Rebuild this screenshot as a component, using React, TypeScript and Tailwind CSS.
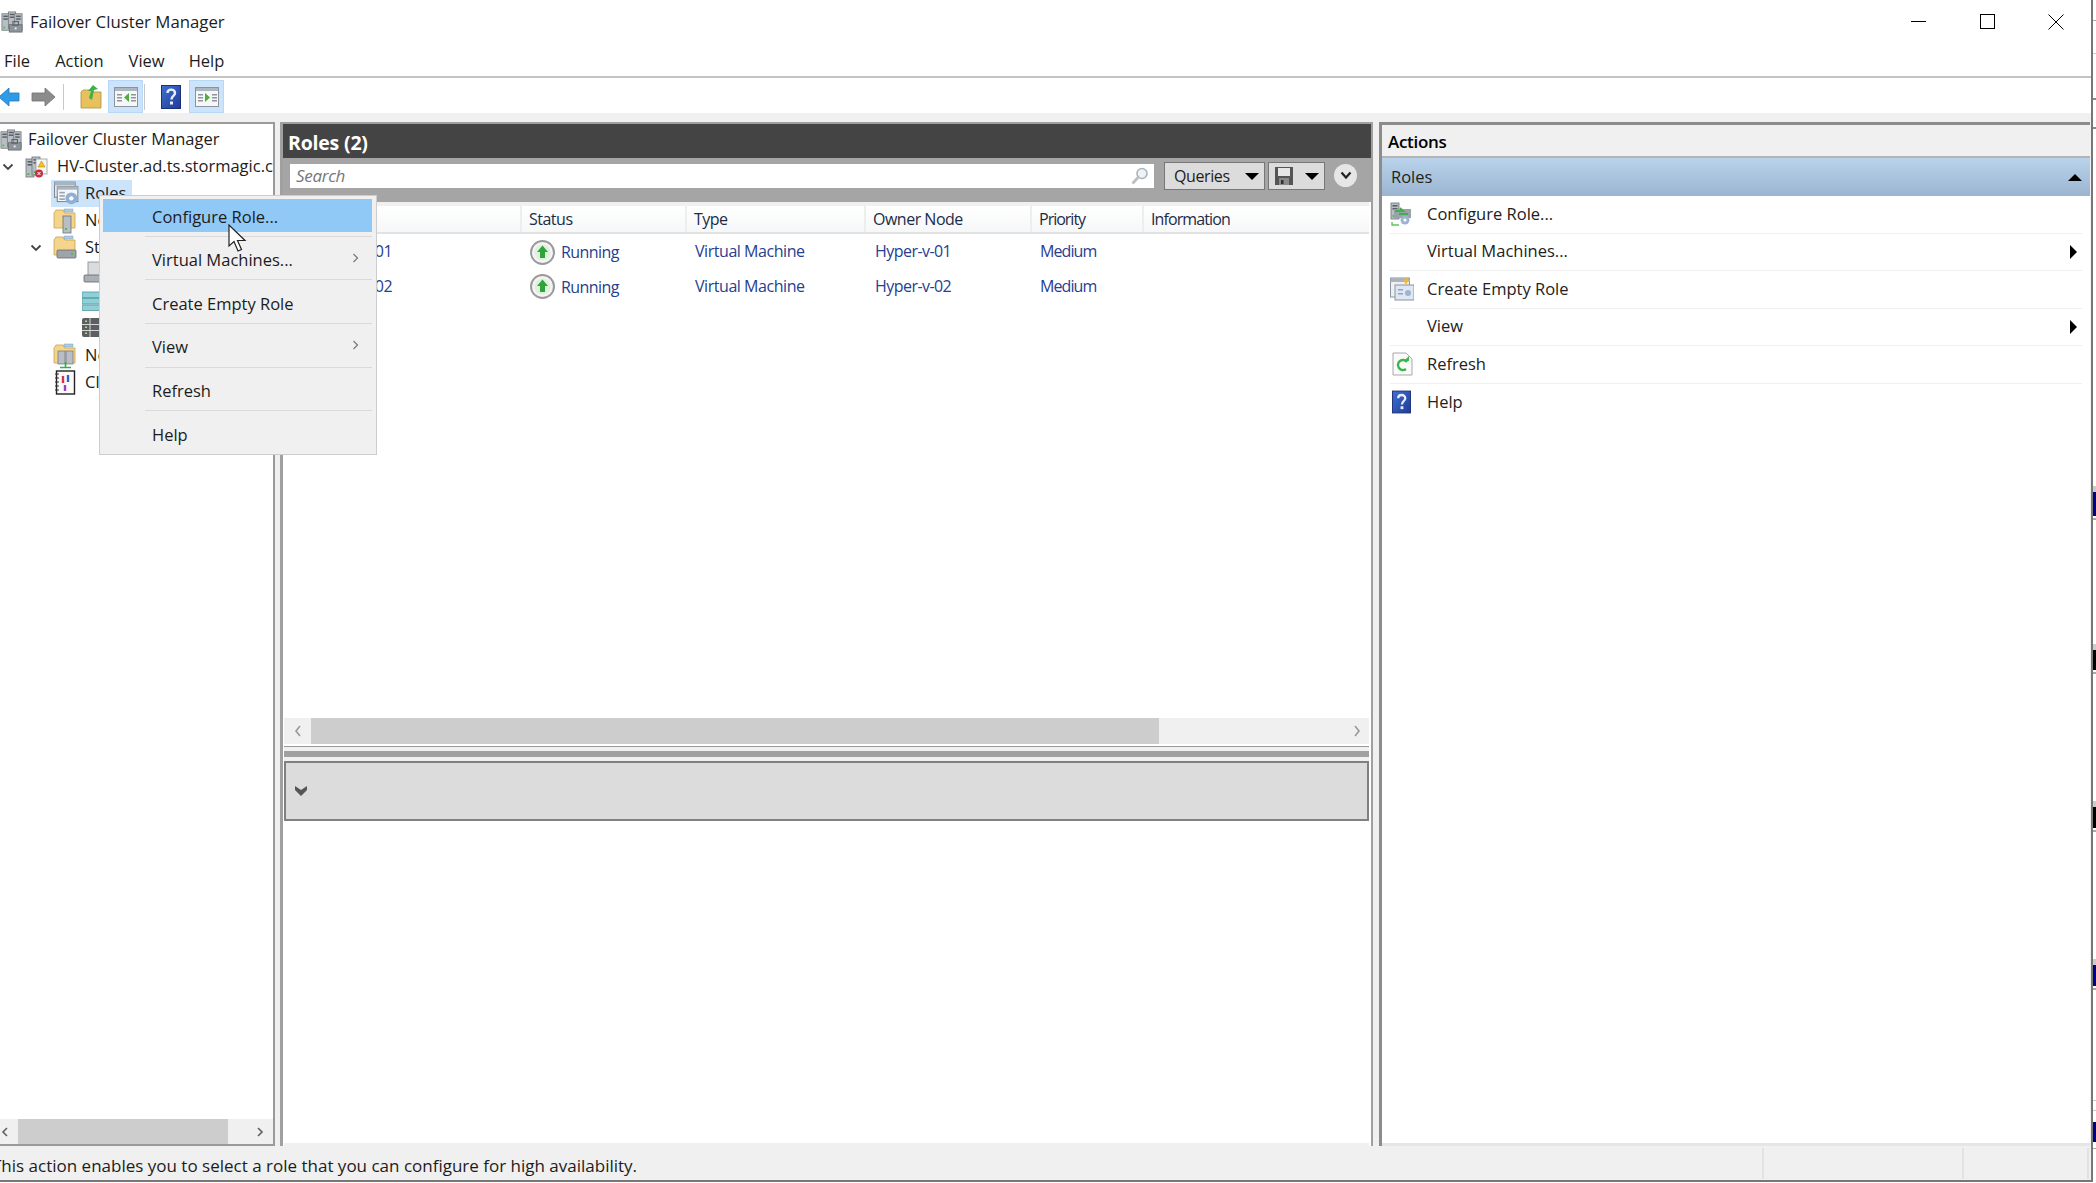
import { ReactNode } from "react"

const sans = "font-['Open_Sans','Noto_Sans',sans-serif]"

function Server({ x, y, w = 8, h = 18, fill = "#b9bec4" }: { x: number; y: number; w?: number; h?: number; fill?: string }) {
  return (
    <g>
      <rect x={x} y={y} width={w} height={h} fill={fill} stroke="#6c7278" strokeWidth="0.8" />
      <rect x={x + 1.5} y={y + 2} width={w - 3} height="1.6" fill="#596066" />
      <rect x={x + 1.5} y={y + 5} width={w - 3} height="1.6" fill="#596066" />
      <rect x={x + 1.5} y={y + h - 4} width="2" height="2" fill="#49c24a" />
    </g>
  )
}

function ClusterIcon({ size = 22 }: { size?: number }) {
  return (
    <svg width={size} height={size} viewBox="0 0 24 24" className="shrink-0">
      <Server x={1} y={3} />
      <Server x={8} y={1} />
      <Server x={15} y={3} />
      <rect x="9" y="15" width="14" height="8" fill="#8d949b" stroke="#5e646a" strokeWidth="0.8" />
      <rect x="13" y="11.5" width="6" height="4" fill="none" stroke="#5e646a" strokeWidth="1.2" />
      <circle cx="16" cy="19" r="1.2" fill="#e8e8e8" />
    </svg>
  )
}

function ClusterErrIcon() {
  return (
    <svg width={24} height={24} viewBox="0 0 24 24" className="shrink-0">
      <Server x={1} y={4} />
      <Server x={7} y={2} />
      <rect x="11" y="4" width="11" height="15" fill="#f6f6f6" stroke="#9a9a9a" strokeWidth="0.8" />
      <path d="M16.5 6 L20 12 L13 12 Z" fill="#f5c518" stroke="#9a7a10" strokeWidth="0.5" />
      <circle cx="14" cy="18.5" r="4" fill="#c8303f" />
      <path d="M12.5 17 L15.5 20 M15.5 17 L12.5 20" stroke="#fff" strokeWidth="1" />
    </svg>
  )
}

function WindowGearIcon() {
  return (
    <svg width={26} height={26} viewBox="0 0 24 24" className="shrink-0">
      <rect x="0.5" y="1" width="19" height="14" fill="#eef1f4" stroke="#7d8791" />
      <rect x="0.5" y="1" width="19" height="3" fill="#aab4bf" />
      <rect x="3" y="5" width="19" height="14" fill="#f4f6f8" stroke="#7d8791" />
      <rect x="3" y="5" width="19" height="3" fill="#aab4bf" />
      <rect x="5" y="10" width="5" height="1.5" fill="#9aa4ae" />
      <rect x="5" y="13" width="5" height="1.5" fill="#9aa4ae" />
      <rect x="5" y="16" width="5" height="1.5" fill="#9aa4ae" />
      <circle cx="16" cy="16" r="5.5" fill="#8fb0d4" />
      <circle cx="16" cy="16" r="2" fill="#fff" />
    </svg>
  )
}

function FolderBase({ children }: { children?: ReactNode }) {
  return (
    <svg width={24} height={26} viewBox="0 0 24 26" className="shrink-0">
      <path d="M1 5 V20 H22 V5 H12 L10 2 H3 L1 5 Z" fill="#f5d58a" stroke="#c4a255" strokeWidth="0.8" />
      <rect x="11" y="1" width="9" height="3" fill="#aecbe2" stroke="#86a0b6" strokeWidth="0.5" />
      {children}
    </svg>
  )
}

function Toolbar2Pane({ right }: { right?: boolean }) {
  return (
    <svg width={24} height={20} viewBox="0 0 24 20">
      <rect x="0.5" y="0.5" width="23" height="19" fill="#f7f7f7" stroke="#8a949e" />
      <rect x="1" y="1" width="22" height="3" fill="#aeb7c0" />
      <rect x="3" y="7" width="5" height="1.5" fill="#8c96a0" />
      <rect x="3" y="10" width="5" height="1.5" fill="#8c96a0" />
      <rect x="3" y="13" width="5" height="1.5" fill="#8c96a0" />
      <rect x="17" y="7" width="5" height="1.5" fill="#8c96a0" />
      <rect x="17" y="10" width="5" height="1.5" fill="#8c96a0" />
      <rect x="17" y="13" width="5" height="1.5" fill="#8c96a0" />
      {right ? <path d="M10 6 L15 10.5 L10 15 Z" fill="#4cae3f" /> : <path d="M15 6 L10 10.5 L15 15 Z" fill="#4cae3f" />}
    </svg>
  )
}

function HelpBook({ w = 20, h = 24 }: { w?: number; h?: number }) {
  return (
    <svg width={w} height={h} viewBox="0 0 20 24" className="shrink-0">
      <defs>
        <linearGradient id="helpb" x1="0" y1="0" x2="1" y2="1">
          <stop offset="0" stopColor="#3f6fd0" />
          <stop offset="1" stopColor="#1f3c96" />
        </linearGradient>
      </defs>
      <rect x="0.5" y="0.5" width="19" height="23" fill="url(#helpb)" stroke="#1c2f78" />
      <path d="M6.5 8 C6.5 3.5 14 3.5 14 8 C14 11 10.5 11 10.5 14.5" fill="none" stroke="#e8eefc" strokeWidth="2.4" />
      <rect x="9" y="16.5" width="3" height="3" fill="#e8eefc" />
    </svg>
  )
}

function RunningIcon() {
  return (
    <svg width={25} height={25} viewBox="0 0 25 25" className="shrink-0">
      <circle cx="12.5" cy="12.5" r="11.5" fill="#f4f4f4" stroke="#9a9a9a" strokeWidth="2" />
      <circle cx="12.5" cy="12.5" r="8" fill="#dff1dc" />
      <path d="M12.5 5.5 L18 12 H15 V18 H10 V12 H7 Z" fill="#2fa43a" />
    </svg>
  )
}

function TreeChevron() {
  return (
    <svg width={12} height={8} viewBox="0 0 12 8" className="shrink-0">
      <path d="M1.5 1.5 L6 6 L10.5 1.5" fill="none" stroke="#444" strokeWidth="1.8" />
    </svg>
  )
}

function TreeRow({ indent, chevronX, iconW, icon, label, active }: { indent: number; chevronX?: number; iconW: number; icon: ReactNode; label: string; active?: boolean }) {
  return (
    <div className="flex h-[27px] items-center overflow-hidden">
      <div className="flex h-full shrink-0 items-center" style={{ width: indent, paddingLeft: chevronX }}>
        {chevronX !== undefined && <TreeChevron />}
      </div>
      <div className={`flex h-full items-center whitespace-nowrap ${active ? "bg-[#cce4fb] pl-[3px] pr-[6px]" : ""}`}>
        <div className="flex shrink-0 items-center" style={{ width: iconW }}>
          {icon}
        </div>
        <span>{label}</span>
      </div>
    </div>
  )
}

const columns = [
  { label: "Name", w: 238, track: "" },
  { label: "Status", w: 165, track: "" },
  { label: "Type", w: 179, track: "" },
  { label: "Owner Node", w: 166, track: "" },
  { label: "Priority", w: 112, track: "tracking-[-1px]" },
  { label: "Information", w: 226, track: "tracking-[-0.9px]" },
]

function TableRow({ name, owner, h }: { name: string; owner: string; h: string }) {
  return (
    <div className={`flex items-center text-[16px] tracking-[-0.55px] text-[#26408f] ${h}`}>
      <div className="w-[108px] shrink-0 pb-[2px] text-right">{name}</div>
      <div className="flex w-[129px] shrink-0" />
      <div className="flex w-[165px] shrink-0 items-center gap-[6px] pl-[9px]">
        <RunningIcon />
        <span>Running</span>
      </div>
      <div className="w-[179px] shrink-0 pb-[2px] pl-[9px] tracking-[-0.45px]">Virtual Machine</div>
      <div className="w-[166px] shrink-0 pb-[2px] pl-[10px]">{owner}</div>
      <div className="w-[112px] shrink-0 pb-[2px] pl-[9px] tracking-[-0.9px]">Medium</div>
    </div>
  )
}

function ActionRow({ label, icon, arrow }: { label: string; icon?: ReactNode; arrow?: boolean }) {
  return (
    <div className="mx-[8px] flex h-[37.5px] items-center border-b border-[#efefef] text-[16.5px] text-[#222] last:border-b-0">
      <div className="flex w-[37px] shrink-0 items-center">{icon}</div>
      <span className="flex-1">{label}</span>
      {arrow && <div className="mr-[5px] h-0 w-0 border-y-[7px] border-l-[7px] border-y-transparent border-l-black" />}
    </div>
  )
}

const menuItems = ["Configure Role...", "Virtual Machines...", "Create Empty Role", "View", "Refresh", "Help"]

function ContextMenu() {
  return (
    <div className="absolute left-[99px] top-[195px] z-10 w-[278px] border border-[#cdcdcd] bg-[#f0f0f0] pb-[4px] pl-[3px] pr-[4px] pt-[3px] text-[16.5px] text-[#1c1c1c]">
      {menuItems.map((item, i) => (
        <div key={item}>
          <div className={`flex h-[33px] items-center pl-[49px] pr-[10px] pt-[3px] ${i === 0 ? "bg-[#90c8f6]" : ""}`}>
            <span className="flex-1">{item}</span>
            {(i === 1 || i === 3) && (
              <svg width={7} height={10} viewBox="0 0 7 10" className="mr-[3px] -translate-y-[3px]">
                <path d="M1.5 1 L5.5 5 L1.5 9" fill="none" stroke="#777" strokeWidth="1.2" />
              </svg>
            )}
          </div>
          {i < 5 && (
            <div className="flex h-[10.6px] items-center pb-[2px] pl-[42px]">
              <div className="h-px w-full bg-[#dadada]" />
            </div>
          )}
        </div>
      ))}
    </div>
  )
}

function SideSlivers() {
  return (
    <div className="flex w-[3px] shrink-0 flex-col">
      <div className="mt-[20px] h-[1px] bg-[#aaa]" />
      <div className="mt-[32px] h-[1px] bg-[#ccc]" />
      <div className="mt-[44px] h-[2px] bg-[#888]" />
      <div className="mt-[27px] h-[2px] bg-[#888]" />
      <div className="mt-[357px] h-[6px] bg-[#ccc]" />
      <div className="h-[24px] bg-[#000080]" />
      <div className="mt-[2px] h-[2px] bg-[#aaa]" />
      <div className="mt-[124px] h-[6px] bg-[#ccc]" />
      <div className="h-[20px] bg-black" />
      <div className="mt-[2px] h-[2px] bg-[#aaa]" />
      <div className="mt-[127px] h-[6px] bg-[#ccc]" />
      <div className="h-[21px] bg-black" />
      <div className="mt-[2px] h-[2px] bg-[#aaa]" />
      <div className="mt-[127px] h-[6px] bg-[#ccc]" />
      <div className="h-[21px] bg-[#000080]" />
      <div className="mt-[2px] h-[2px] bg-[#aaa]" />
      <div className="mt-[110px] h-[1px] bg-[#ccc]" />
      <div className="mt-[9px] h-[1px] bg-[#ccc]" />
      <div className="mt-[11px] h-[20px] bg-[#000080]" />
      <div className="mt-[6px] h-[1px] bg-[#aaa]" />
    </div>
  )
}

export default function App() {
  return (
    <div className={`relative flex h-[1183px] w-[2096px] overflow-hidden bg-white text-[#1c1c1c] ${sans}`}>
      <div className="flex h-[1182px] w-[2093px] shrink-0 flex-col border-r-2 border-[#777]">
        {/* title bar */}
        <div className="flex h-[43px] shrink-0 items-center">
          <div className="ml-[1px] mr-[7px]">
            <ClusterIcon />
          </div>
          <span className="flex-1 text-[16.8px]">Failover Cluster Manager</span>
          <div className="flex w-[71px] items-center justify-center">
            <div className="h-px w-[15px] bg-black" />
          </div>
          <div className="flex w-[67px] items-center justify-center">
            <div className="h-[15px] w-[15px] border border-black" />
          </div>
          <div className="flex w-[70px] items-center justify-center">
            <svg width={16} height={16} viewBox="0 0 16 16">
              <path d="M0.5 0.5 L15.5 15.5 M15.5 0.5 L0.5 15.5" stroke="black" strokeWidth="1" />
            </svg>
          </div>
        </div>

        {/* menu bar */}
        <div className="flex h-[35px] shrink-0 items-center border-b-2 border-[#c4c4c4] pt-[4px] text-[16.5px]">
          <span className="ml-[4px]">File</span>
          <span className="ml-[25px]">Action</span>
          <span className="ml-[25px]">View</span>
          <span className="ml-[24px]">Help</span>
        </div>

        {/* toolbar */}
        <div className="flex h-[35px] shrink-0 items-center pt-[2px]">
          <svg width={22} height={20} viewBox="0 0 22 20" className="-ml-[1px]">
            <path d="M0 10 L10 1 V6 H20 V14 H10 V19 Z" fill="#2f9be8" stroke="#1f78bd" strokeWidth="0.8" />
          </svg>
          <svg width={25} height={20} viewBox="0 0 25 20" className="ml-[10px]">
            <path d="M24 10 L14 1 V6 H1 V14 H14 V19 Z" fill="#8c8c8c" stroke="#6e6e6e" strokeWidth="0.8" />
          </svg>
          <div className="ml-[7px] h-[26px] w-px bg-[#c8c8c8]" />
          <svg width={22} height={26} viewBox="0 0 22 26" className="ml-[16px]">
            <path d="M1 8 V24 H21 V8 H12 L10 6 H3 Z" fill="#e8c15f" stroke="#b0913e" strokeWidth="0.8" />
            <path d="M9 14 L11 7 L8 7 L13 1 L18 5 L14 6 L12 16 Z" fill="#3fb04a" />
          </svg>
          <div className="ml-[6px] flex h-[33px] w-[35px] items-center justify-center border border-[#b8d8f5] bg-[#cce4fb]">
            <Toolbar2Pane />
          </div>
          <div className="ml-[1px] h-[26px] w-px bg-[#c8c8c8]" />
          <div className="ml-[16px]">
            <HelpBook />
          </div>
          <div className="ml-[8px] flex h-[33px] w-[35px] items-center justify-center border border-[#b8d8f5] bg-[#cce4fb]">
            <Toolbar2Pane right />
          </div>
        </div>

        {/* panes */}
        <div className="flex min-h-0 flex-1 bg-[#f0f0f0] pt-[9px]">
          {/* tree */}
          <div className="flex w-[275px] shrink-0 flex-col border-r-2 border-t-2 border-b-2 border-[#9a9a9a] bg-white text-[16.5px]">
            <div className="flex-1 overflow-hidden pt-[2px]">
              <TreeRow indent={0} iconW={28} icon={<ClusterIcon />} label="Failover Cluster Manager" />
              <TreeRow indent={25} chevronX={2} iconW={32} icon={<ClusterErrIcon />} label="HV-Cluster.ad.ts.stormagic.com" />
              <TreeRow indent={51} iconW={31} active icon={<WindowGearIcon />} label="Roles" />
              <TreeRow
                indent={53}
                iconW={32}
                icon={
                  <FolderBase>
                    <rect x="10" y="8" width="8" height="17" fill="#b9bec4" stroke="#6c7278" strokeWidth="0.8" />
                    <rect x="12" y="20" width="2" height="2" fill="#49c24a" />
                  </FolderBase>
                }
                label="Nodes"
              />
              <TreeRow
                indent={53}
                chevronX={30}
                iconW={32}
                icon={
                  <FolderBase>
                    <rect x="4" y="15" width="19" height="8" rx="1" fill="#9ea4aa" stroke="#666c72" strokeWidth="0.8" />
                    <rect x="18" y="18" width="2" height="2" fill="#49c24a" />
                  </FolderBase>
                }
                label="Storage"
              />
              <TreeRow
                indent={82}
                iconW={32}
                icon={
                  <svg width={24} height={24} viewBox="0 0 24 24" className="shrink-0 -translate-y-[3px]">
                    <rect x="6" y="2" width="12" height="14" fill="#d8dcdf" stroke="#888" strokeWidth="0.8" />
                    <rect x="2" y="15" width="20" height="7" rx="1" fill="#aab0b5" stroke="#666" strokeWidth="0.8" />
                  </svg>
                }
                label="Disks"
              />
              <TreeRow
                indent={82}
                iconW={32}
                icon={
                  <svg width={24} height={24} viewBox="0 0 24 24" className="shrink-0 -translate-y-[1px]">
                    <rect x="0" y="3" width="20" height="5.5" fill="#8fd0d6" stroke="#4f9aa0" strokeWidth="0.8" />
                    <rect x="0" y="9.5" width="20" height="5.5" fill="#8fd0d6" stroke="#4f9aa0" strokeWidth="0.8" />
                    <rect x="0" y="16" width="20" height="5.5" fill="#8fd0d6" stroke="#4f9aa0" strokeWidth="0.8" />
                  </svg>
                }
                label="Pools"
              />
              <TreeRow
                indent={82}
                iconW={32}
                icon={
                  <svg width={24} height={24} viewBox="0 0 24 24" className="shrink-0 -translate-y-[2px]">
                    <rect x="0" y="3" width="20" height="19" rx="2" fill="#5c5f62" />
                    <path d="M0 9.5 H20 M0 15.5 H20 M8 3 V22" stroke="#d5d5d5" strokeWidth="1" />
                    <rect x="3" y="5.5" width="2" height="1.5" fill="#9fe07a" />
                    <rect x="3" y="11.5" width="2" height="1.5" fill="#9fe07a" />
                    <rect x="3" y="17.5" width="2" height="1.5" fill="#9fe07a" />
                  </svg>
                }
                label="Enclosures"
              />
              <TreeRow
                indent={53}
                iconW={32}
                icon={
                  <FolderBase>
                    <rect x="5" y="8" width="7" height="13" fill="#b9bec4" stroke="#6c7278" strokeWidth="0.7" />
                    <rect x="13" y="8" width="7" height="13" fill="#b9bec4" stroke="#6c7278" strokeWidth="0.7" />
                    <path d="M12.5 19 V24 M7 24.5 H18" stroke="#2fb24a" strokeWidth="1.6" />
                  </FolderBase>
                }
                label="Networks"
              />
              <TreeRow
                indent={54}
                iconW={31}
                icon={
                  <svg width={22} height={25} viewBox="0 0 22 25" className="shrink-0">
                    <rect x="2.5" y="1" width="18" height="23" fill="#fafafa" stroke="#222" strokeWidth="1.4" />
                    <path d="M1 4 H5 M1 8 H5 M1 12 H5 M1 16 H5 M1 20 H5" stroke="#333" strokeWidth="1.2" />
                    <path d="M9 6 V13" stroke="#d6304a" strokeWidth="2.4" />
                    <path d="M14 5 V12" stroke="#2f62c8" strokeWidth="2.4" />
                    <path d="M11 15 V21" stroke="#9a3fc0" strokeWidth="2.4" />
                  </svg>
                }
                label="Cluster Events"
              />
            </div>
            <div className="flex h-[25px] shrink-0 items-center bg-[#f0f0f0]">
              <svg width={18} height={24} viewBox="0 0 18 24" className="shrink-0">
                <path d="M7 8 L3 12 L7 16" fill="none" stroke="#606060" strokeWidth="1.6" />
              </svg>
              <div className="h-full w-[210px] bg-[#cdcdcd]" />
              <div className="flex flex-1 justify-end pr-[9px]">
                <svg width={8} height={24} viewBox="0 0 8 24">
                  <path d="M2 8 L6 12 L2 16" fill="none" stroke="#606060" strokeWidth="1.6" />
                </svg>
              </div>
            </div>
          </div>

          {/* center */}
          <div className="ml-[5px] flex w-[1093px] shrink-0 flex-col border-l-[3px] border-r-2 border-t-2 border-[#a0a0a0]">
            <div className="flex h-[34px] shrink-0 items-center bg-[#444] pl-[5px] pt-[3px] text-[19.5px] font-bold tracking-[-0.2px] text-white">Roles (2)</div>
            <div className="flex h-[44px] shrink-0 items-start bg-[#a5a5a5] pl-[7px]">
              <div className="mt-[6px] flex h-[24px] w-[864px] items-center justify-between bg-white pl-[6px] pr-[4px]">
                <span className="text-[17px] italic tracking-[-0.3px] text-[#777]">Search</span>
                <svg width={20} height={20} viewBox="0 0 20 20">
                  <circle cx="12" cy="7.5" r="5" fill="#eef3f7" stroke="#aab4bc" strokeWidth="1.6" />
                  <path d="M8 11.5 L2.5 17.5" stroke="#b8bec4" strokeWidth="2.6" />
                </svg>
              </div>
              <div className="ml-[10px] mt-[4px] flex h-[28px] w-[101px] items-center justify-between border border-[#777] bg-[#dcdcdc] pl-[9px] pr-[5px] text-[16px] tracking-[-0.4px]">
                <span>Queries</span>
                <div className="h-0 w-0 border-x-[7px] border-t-[7px] border-x-transparent border-t-black" />
              </div>
              <div className="ml-[3px] mt-[4px] flex h-[28px] w-[57px] items-center justify-between border border-[#777] bg-[#dcdcdc] pl-[5px] pr-[5px]">
                <svg width={20} height={20} viewBox="0 0 20 20">
                  <path d="M1 1 H19 V19 H1 Z" fill="#555" />
                  <rect x="4" y="2" width="12" height="8" fill="#e6e6e6" />
                  <rect x="5" y="12" width="10" height="7" fill="#8a8a8a" />
                  <rect x="7" y="14" width="2.5" height="4" fill="#333" />
                </svg>
                <div className="h-0 w-0 border-x-[7px] border-t-[7px] border-x-transparent border-t-black" />
              </div>
              <div className="ml-[9px] mt-[6px] flex h-[23px] w-[23px] items-center justify-center rounded-full bg-[#e6e6e6]">
                <svg width={12} height={9} viewBox="0 0 12 9">
                  <path d="M1.5 1.5 L6 6.5 L10.5 1.5" fill="none" stroke="#222" strokeWidth="2.2" />
                </svg>
              </div>
            </div>
            <div className="flex min-h-0 flex-1 flex-col bg-white pl-[1px] pr-[2px]">
              <div className="flex h-[32px] shrink-0 border-b-2 border-[#e2e2e2] border-t-[4px] border-t-[#f0f0f0] bg-gradient-to-b from-white to-[#f6f7f8] text-[16px] tracking-[-0.5px] text-[#1c2c48]">
                {columns.map((c) => (
                  <div key={c.label} className={`flex shrink-0 items-center border-r-2 border-[#eceef0] pl-[7px] last:border-r-0 ${c.track}`} style={{ width: c.w }}>
                    {c.label}
                  </div>
                ))}
              </div>
              <div className="h-[484px] shrink-0 pt-[1px]">
                <TableRow name="Hyper-v-VM01" owner="Hyper-v-01" h="h-[34px]" />
                <TableRow name="Hyper-v-VM02" owner="Hyper-v-02" h="h-[35px]" />
              </div>
              <div className="flex h-[26px] shrink-0 items-center bg-[#f0f0f0]">
                <svg width={27} height={26} viewBox="0 0 27 26" className="shrink-0">
                  <path d="M16 8 L12 13 L16 18" fill="none" stroke="#999" strokeWidth="1.6" />
                </svg>
                <div className="h-full w-[848px] bg-[#cdcdcd]" />
                <div className="flex flex-1 justify-end pr-[8px]">
                  <svg width={8} height={26} viewBox="0 0 8 26">
                    <path d="M2 8 L6 13 L2 18" fill="none" stroke="#999" strokeWidth="1.6" />
                  </svg>
                </div>
              </div>
              <div className="h-[3px] shrink-0 border-b border-[#999]" />
              <div className="h-[4px] shrink-0 bg-[#f0f0f0]" />
              <div className="h-[6px] shrink-0 bg-[#a0a0a0]" />
              <div className="h-[4px] shrink-0 bg-[#f0f0f0]" />
              <div className="flex h-[60px] shrink-0 items-center border-2 border-[#808080] bg-[#dcdcdc] pl-[8px]">
                <svg width={14} height={12} viewBox="0 0 14 12">
                  <path d="M1 1 L7 5 L13 1 L13 5 L7 11 L1 5 Z" fill="#555" />
                </svg>
              </div>
              <div className="min-h-0 flex-1" />
              <div className="h-[3px] shrink-0 bg-[#f0f0f0]" />
            </div>
          </div>

          {/* actions */}
          <div className="ml-[6px] flex min-w-0 flex-1 flex-col border-l-[3px] border-t-[3px] border-[#8c8c8c]">
            <div className="flex h-[33px] shrink-0 items-center border-b-2 border-[#b4b4b4] bg-[#f0f0f0] pl-[6px] pt-[2px] text-[17px] font-semibold tracking-[-0.3px] text-black">Actions</div>
            <div className="flex h-[38px] shrink-0 items-center justify-between bg-gradient-to-b from-[#bad3ec] to-[#9bb5d1] pl-[9px] pr-[8px] pt-[1px] text-[16.5px] text-[#222]">
              <span>Roles</span>
              <div className="h-0 w-0 border-x-[7px] border-b-[7px] border-x-transparent border-b-black" />
            </div>
            <div className="flex min-h-0 flex-1 flex-col bg-white">
              <ActionRow
                label="Configure Role..."
                icon={
                  <svg width={23} height={24} viewBox="0 0 23 24">
                    <Server x={1} y={1} w={8} h={16} />
                    <rect x="4" y="7" width="17" height="9" fill="#9aa2a9" />
                    <path d="M5 9 H13 L10 6 M18 12 H9" stroke="#3fb04a" strokeWidth="2" fill="none" />
                    <circle cx="15" cy="18" r="4.5" fill="#9cb4cf" />
                    <circle cx="15" cy="18" r="1.6" fill="#fff" />
                    <path d="M2 20 V23 H9" stroke="#5fc45f" strokeWidth="1.4" fill="none" />
                  </svg>
                }
              />
              <ActionRow label="Virtual Machines..." arrow />
              <ActionRow
                label="Create Empty Role"
                icon={
                  <svg width={24} height={24} viewBox="0 0 24 24">
                    <rect x="0.5" y="1" width="19" height="19" fill="#eef1f4" stroke="#8a949e" />
                    <rect x="0.5" y="1" width="19" height="4" fill="#aab4bf" />
                    <rect x="5" y="8" width="19" height="15" fill="#dfe8f2" stroke="#8a949e" />
                    <rect x="8" y="12" width="5" height="1.5" fill="#8fa4bb" />
                    <rect x="8" y="16" width="5" height="1.5" fill="#8fa4bb" />
                    <circle cx="18" cy="16" r="3" fill="#9cb4cf" />
                    <path d="M16 0 L17.5 3 L21 4 L17.5 5 L16 8 L14.5 5 L12 4 L14.5 3 Z" fill="#f4b73b" />
                  </svg>
                }
              />
              <ActionRow label="View" arrow />
              <ActionRow
                label="Refresh"
                icon={
                  <svg width={22} height={24} viewBox="0 0 22 24" className="ml-[2px]">
                    <path d="M1 1 H14 L20 7 V23 H1 Z" fill="#fafafa" stroke="#a8a8a8" />
                    <path d="M14 17 A5 5 0 1 1 15 10" fill="none" stroke="#3bb54a" strokeWidth="2.4" />
                    <path d="M12 9 H17 V4 Z" fill="#3bb54a" />
                  </svg>
                }
              />
              <ActionRow
                label="Help"
                icon={
                  <div className="ml-[2px]">
                    <HelpBook w={19} h={24} />
                  </div>
                }
              />
            </div>
            <div className="h-[3px] shrink-0 bg-[#e6e6e6]" />
          </div>
          <div className="w-[1px] shrink-0" />
        </div>

        {/* status bar */}
        <div className="flex h-[36px] shrink-0 items-center border-b-2 border-[#777] bg-[#f0f0f0] text-[17px]">
          <span className="-ml-[8px] w-[1770px] shrink-0 pt-[6px]">This action enables you to select a role that you can configure for high availability.</span>
          <div className="h-[31px] w-[200px] shrink-0 border-l-2 border-[#e2e2e2]" />
          <div className="h-[31px] w-[127px] shrink-0 border-x-2 border-[#e2e2e2]" />
        </div>
      </div>
      <SideSlivers />
      <ContextMenu />

      {/* mouse pointer */}
      <svg width={20} height={30} viewBox="0 0 20 30" className="absolute left-[228px] top-[224px] z-20">
        <path d="M1 1 V22 L6 17.5 L10 27 L13.5 25.5 L9.5 16.5 L17 16.5 Z" fill="white" stroke="#222" strokeWidth="1.2" />
      </svg>
    </div>
  )
}
